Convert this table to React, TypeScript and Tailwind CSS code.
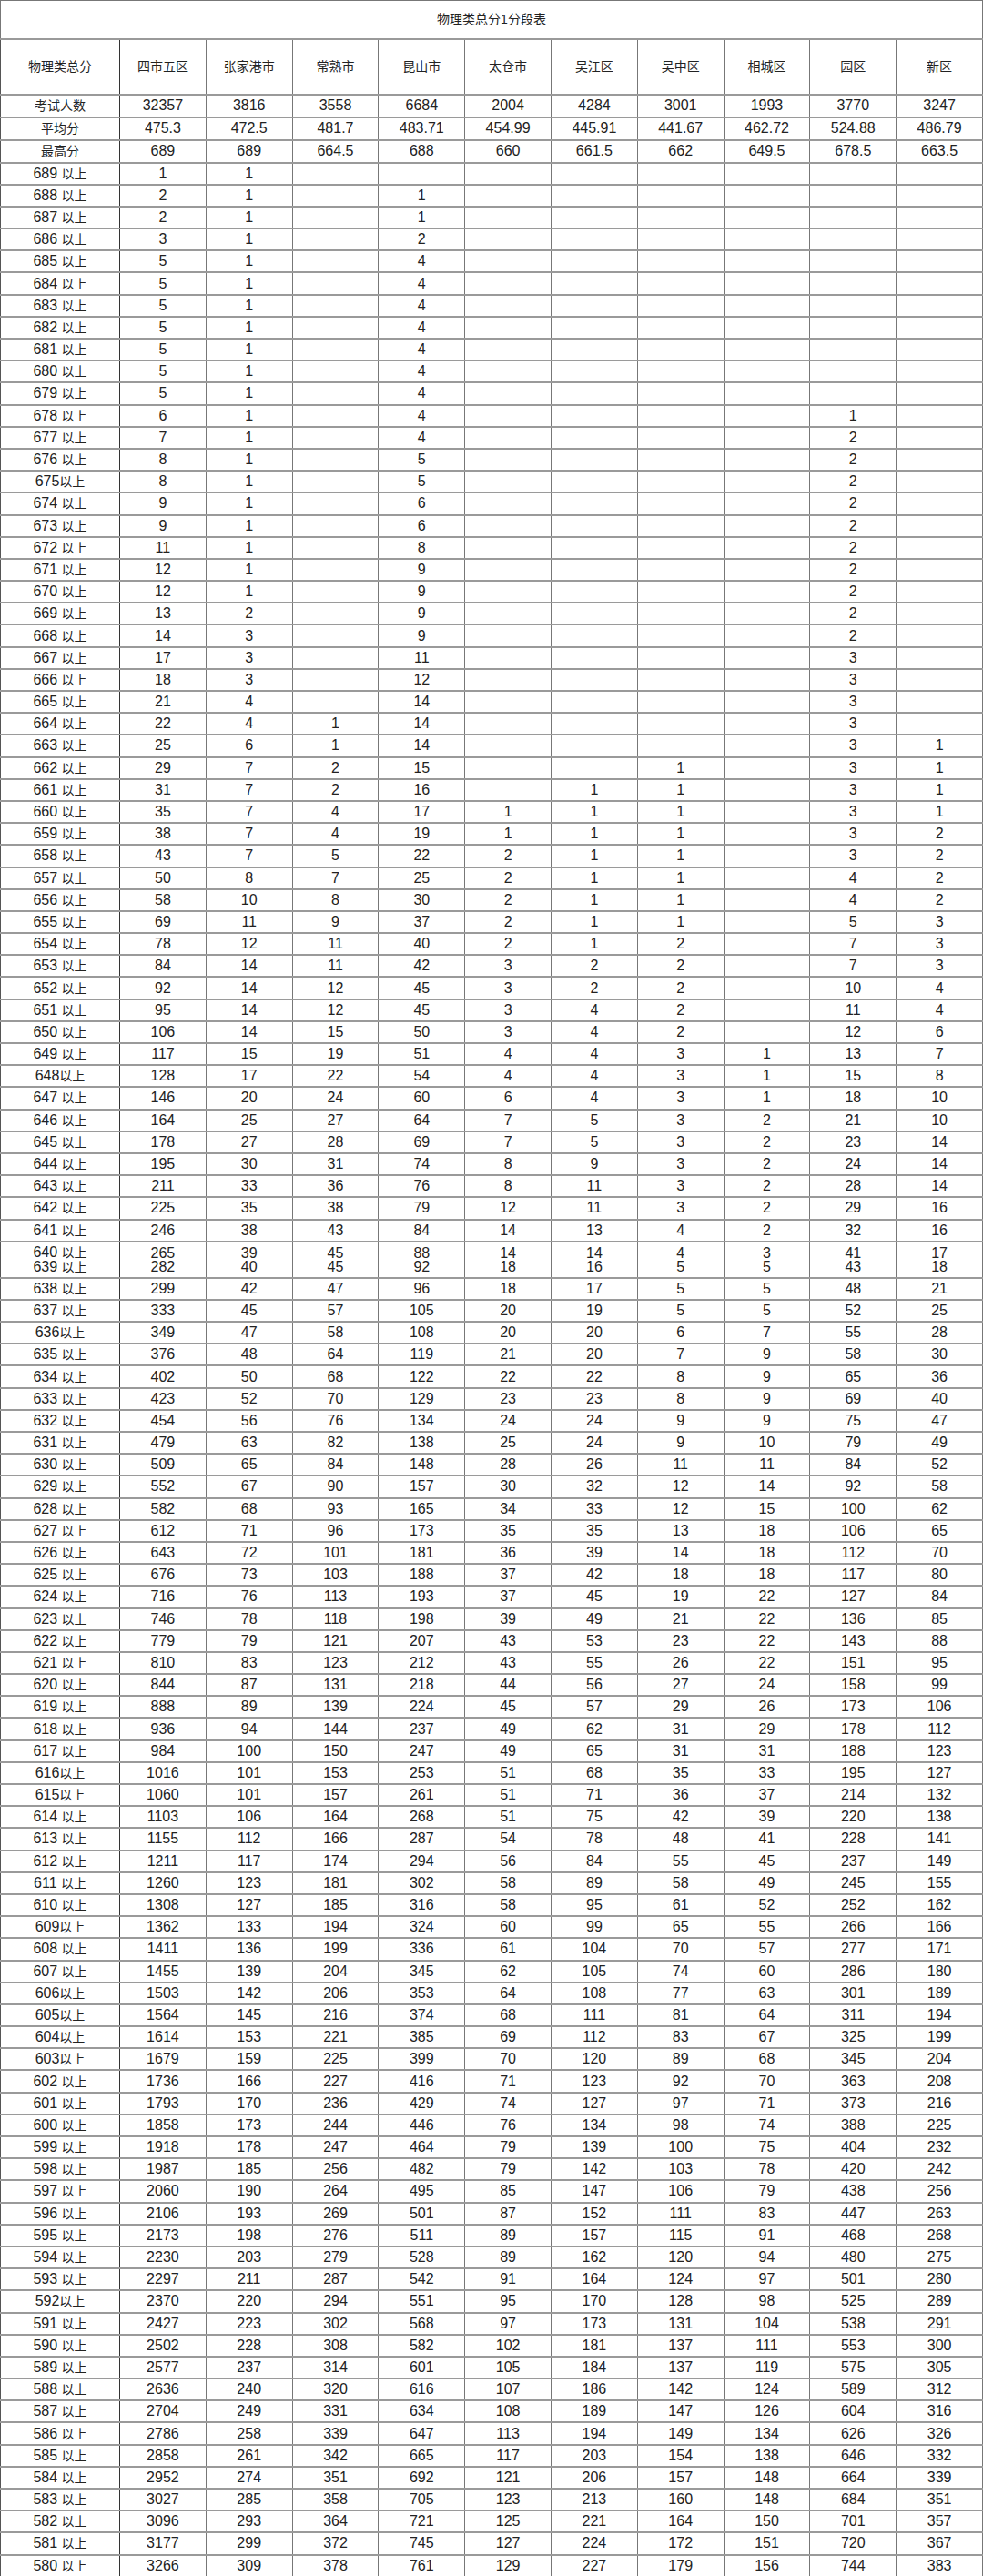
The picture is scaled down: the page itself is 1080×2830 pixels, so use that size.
import React from 'react';

const districts = ['四市五区', '张家港市', '常熟市', '昆山市', '太仓市', '吴江区', '吴中区', '相城区', '园区', '新区'];

const stats: [string, string][] = [
  ['考试人数', '32357,3816,3558,6684,2004,4284,3001,1993,3770,3247'],
  ['平均分', '475.3,472.5,481.7,483.71,454.99,445.91,441.67,462.72,524.88,486.79'],
  ['最高分', '689,689,664.5,688,660,661.5,662,649.5,678.5,663.5'],
];

// score line, counts per district (empty = no one)
const rows: [string, string][] = [
  ['689 以上', '1,1'],
  ['688 以上', '2,1,,1'],
  ['687 以上', '2,1,,1'],
  ['686 以上', '3,1,,2'],
  ['685 以上', '5,1,,4'],
  ['684 以上', '5,1,,4'],
  ['683 以上', '5,1,,4'],
  ['682 以上', '5,1,,4'],
  ['681 以上', '5,1,,4'],
  ['680 以上', '5,1,,4'],
  ['679 以上', '5,1,,4'],
  ['678 以上', '6,1,,4,,,,,1'],
  ['677 以上', '7,1,,4,,,,,2'],
  ['676 以上', '8,1,,5,,,,,2'],
  ['675以上', '8,1,,5,,,,,2'],
  ['674 以上', '9,1,,6,,,,,2'],
  ['673 以上', '9,1,,6,,,,,2'],
  ['672 以上', '11,1,,8,,,,,2'],
  ['671 以上', '12,1,,9,,,,,2'],
  ['670 以上', '12,1,,9,,,,,2'],
  ['669 以上', '13,2,,9,,,,,2'],
  ['668 以上', '14,3,,9,,,,,2'],
  ['667 以上', '17,3,,11,,,,,3'],
  ['666 以上', '18,3,,12,,,,,3'],
  ['665 以上', '21,4,,14,,,,,3'],
  ['664 以上', '22,4,1,14,,,,,3'],
  ['663 以上', '25,6,1,14,,,,,3,1'],
  ['662 以上', '29,7,2,15,,,1,,3,1'],
  ['661 以上', '31,7,2,16,,1,1,,3,1'],
  ['660 以上', '35,7,4,17,1,1,1,,3,1'],
  ['659 以上', '38,7,4,19,1,1,1,,3,2'],
  ['658 以上', '43,7,5,22,2,1,1,,3,2'],
  ['657 以上', '50,8,7,25,2,1,1,,4,2'],
  ['656 以上', '58,10,8,30,2,1,1,,4,2'],
  ['655 以上', '69,11,9,37,2,1,1,,5,3'],
  ['654 以上', '78,12,11,40,2,1,2,,7,3'],
  ['653 以上', '84,14,11,42,3,2,2,,7,3'],
  ['652 以上', '92,14,12,45,3,2,2,,10,4'],
  ['651 以上', '95,14,12,45,3,4,2,,11,4'],
  ['650 以上', '106,14,15,50,3,4,2,,12,6'],
  ['649 以上', '117,15,19,51,4,4,3,1,13,7'],
  ['648以上', '128,17,22,54,4,4,3,1,15,8'],
  ['647 以上', '146,20,24,60,6,4,3,1,18,10'],
  ['646 以上', '164,25,27,64,7,5,3,2,21,10'],
  ['645 以上', '178,27,28,69,7,5,3,2,23,14'],
  ['644 以上', '195,30,31,74,8,9,3,2,24,14'],
  ['643 以上', '211,33,36,76,8,11,3,2,28,14'],
  ['642 以上', '225,35,38,79,12,11,3,2,29,16'],
  ['641 以上', '246,38,43,84,14,13,4,2,32,16'],
  ['640 以上|639 以上', '265|282,39|40,45|45,88|92,14|18,14|16,4|5,3|5,41|43,17|18'],
  ['638 以上', '299,42,47,96,18,17,5,5,48,21'],
  ['637 以上', '333,45,57,105,20,19,5,5,52,25'],
  ['636以上', '349,47,58,108,20,20,6,7,55,28'],
  ['635 以上', '376,48,64,119,21,20,7,9,58,30'],
  ['634 以上', '402,50,68,122,22,22,8,9,65,36'],
  ['633 以上', '423,52,70,129,23,23,8,9,69,40'],
  ['632 以上', '454,56,76,134,24,24,9,9,75,47'],
  ['631 以上', '479,63,82,138,25,24,9,10,79,49'],
  ['630 以上', '509,65,84,148,28,26,11,11,84,52'],
  ['629 以上', '552,67,90,157,30,32,12,14,92,58'],
  ['628 以上', '582,68,93,165,34,33,12,15,100,62'],
  ['627 以上', '612,71,96,173,35,35,13,18,106,65'],
  ['626 以上', '643,72,101,181,36,39,14,18,112,70'],
  ['625 以上', '676,73,103,188,37,42,18,18,117,80'],
  ['624 以上', '716,76,113,193,37,45,19,22,127,84'],
  ['623 以上', '746,78,118,198,39,49,21,22,136,85'],
  ['622 以上', '779,79,121,207,43,53,23,22,143,88'],
  ['621 以上', '810,83,123,212,43,55,26,22,151,95'],
  ['620 以上', '844,87,131,218,44,56,27,24,158,99'],
  ['619 以上', '888,89,139,224,45,57,29,26,173,106'],
  ['618 以上', '936,94,144,237,49,62,31,29,178,112'],
  ['617 以上', '984,100,150,247,49,65,31,31,188,123'],
  ['616以上', '1016,101,153,253,51,68,35,33,195,127'],
  ['615以上', '1060,101,157,261,51,71,36,37,214,132'],
  ['614 以上', '1103,106,164,268,51,75,42,39,220,138'],
  ['613 以上', '1155,112,166,287,54,78,48,41,228,141'],
  ['612 以上', '1211,117,174,294,56,84,55,45,237,149'],
  ['611 以上', '1260,123,181,302,58,89,58,49,245,155'],
  ['610 以上', '1308,127,185,316,58,95,61,52,252,162'],
  ['609以上', '1362,133,194,324,60,99,65,55,266,166'],
  ['608 以上', '1411,136,199,336,61,104,70,57,277,171'],
  ['607 以上', '1455,139,204,345,62,105,74,60,286,180'],
  ['606以上', '1503,142,206,353,64,108,77,63,301,189'],
  ['605以上', '1564,145,216,374,68,111,81,64,311,194'],
  ['604以上', '1614,153,221,385,69,112,83,67,325,199'],
  ['603以上', '1679,159,225,399,70,120,89,68,345,204'],
  ['602 以上', '1736,166,227,416,71,123,92,70,363,208'],
  ['601 以上', '1793,170,236,429,74,127,97,71,373,216'],
  ['600 以上', '1858,173,244,446,76,134,98,74,388,225'],
  ['599 以上', '1918,178,247,464,79,139,100,75,404,232'],
  ['598 以上', '1987,185,256,482,79,142,103,78,420,242'],
  ['597 以上', '2060,190,264,495,85,147,106,79,438,256'],
  ['596 以上', '2106,193,269,501,87,152,111,83,447,263'],
  ['595 以上', '2173,198,276,511,89,157,115,91,468,268'],
  ['594 以上', '2230,203,279,528,89,162,120,94,480,275'],
  ['593 以上', '2297,211,287,542,91,164,124,97,501,280'],
  ['592以上', '2370,220,294,551,95,170,128,98,525,289'],
  ['591 以上', '2427,223,302,568,97,173,131,104,538,291'],
  ['590 以上', '2502,228,308,582,102,181,137,111,553,300'],
  ['589 以上', '2577,237,314,601,105,184,137,119,575,305'],
  ['588 以上', '2636,240,320,616,107,186,142,124,589,312'],
  ['587 以上', '2704,249,331,634,108,189,147,126,604,316'],
  ['586 以上', '2786,258,339,647,113,194,149,134,626,326'],
  ['585 以上', '2858,261,342,665,117,203,154,138,646,332'],
  ['584 以上', '2952,274,351,692,121,206,157,148,664,339'],
  ['583 以上', '3027,285,358,705,123,213,160,148,684,351'],
  ['582 以上', '3096,293,364,721,125,221,164,150,701,357'],
  ['581 以上', '3177,299,372,745,127,224,172,151,720,367'],
  ['580 以上', '3266,309,378,761,129,227,179,156,744,383'],
];

function cells(s: string) {
  const v = s.split(',');
  while (v.length < 10) v.push('');
  return v;
}

function ScoreLabel({ text }: { text: string }) {
  const m = text.match(/^(\d+)(\s?)(.*)$/);
  if (!m) return <>{text}</>;
  return (
    <>
      {m[1]}
      {m[2]}
      <span className="text-[14px]">{m[3]}</span>
    </>
  );
}

const td = 'border-x border-x-[#777] border-y-2 border-y-[#9a9a9a] text-center align-middle p-0';
const first = 'border-l border-r border-l-[#555] border-r-[#333] border-y-2 border-y-[#9a9a9a] text-center align-middle p-0';

export default function App() {
  return (
    <div className="w-[1080px] bg-white text-[#222] font-['Liberation_Sans','Noto_Sans_CJK_SC',sans-serif]">
      <table className="w-[1080px] table-fixed border-collapse text-[16px] leading-none">
        <colgroup>
          <col className="w-[131px]" />
          {districts.map((d) => (
            <col key={d} />
          ))}
        </colgroup>
        <tbody>
          <tr className="h-[42px]">
            <td colSpan={11} className="border border-[#777] border-b-2 border-b-[#9a9a9a] text-center text-[14px]">
              物理类总分1分段表
            </td>
          </tr>
          <tr className="h-[61px]">
            <td className={`${first} text-[14px]`}>物理类总分</td>
            {districts.map((d) => (
              <td key={d} className={`${td} text-[14px]`}>
                {d}
              </td>
            ))}
          </tr>
          {stats.map(([label, vals]) => (
            <tr key={label} className="h-[25px]">
              <td className={`${first} text-[14px]`}>{label}</td>
              {cells(vals).map((v, i) => (
                <td key={i} className={td}>
                  {v}
                </td>
              ))}
            </tr>
          ))}
          {rows.map(([label, vals]) => {
            if (label.includes('|')) {
              const labels = label.split('|');
              return (
                <tr key={label} className="h-[40px]">
                  <td className={`${first} leading-[15px]`}>
                    {labels.map((l) => (
                      <div key={l}>
                        <ScoreLabel text={l} />
                      </div>
                    ))}
                  </td>
                  {cells(vals).map((v, i) => (
                    <td key={i} className={`${td} leading-[15px]`}>
                      {v.split('|').map((x, j) => (
                        <div key={j}>{x}</div>
                      ))}
                    </td>
                  ))}
                </tr>
              );
            }
            return (
              <tr key={label} className="h-[24.2px]">
                <td className={first}>
                  <ScoreLabel text={label} />
                </td>
                {cells(vals).map((v, i) => (
                  <td key={i} className={td}>
                    {v}
                  </td>
                ))}
              </tr>
            );
          })}
        </tbody>
      </table>
    </div>
  );
}
